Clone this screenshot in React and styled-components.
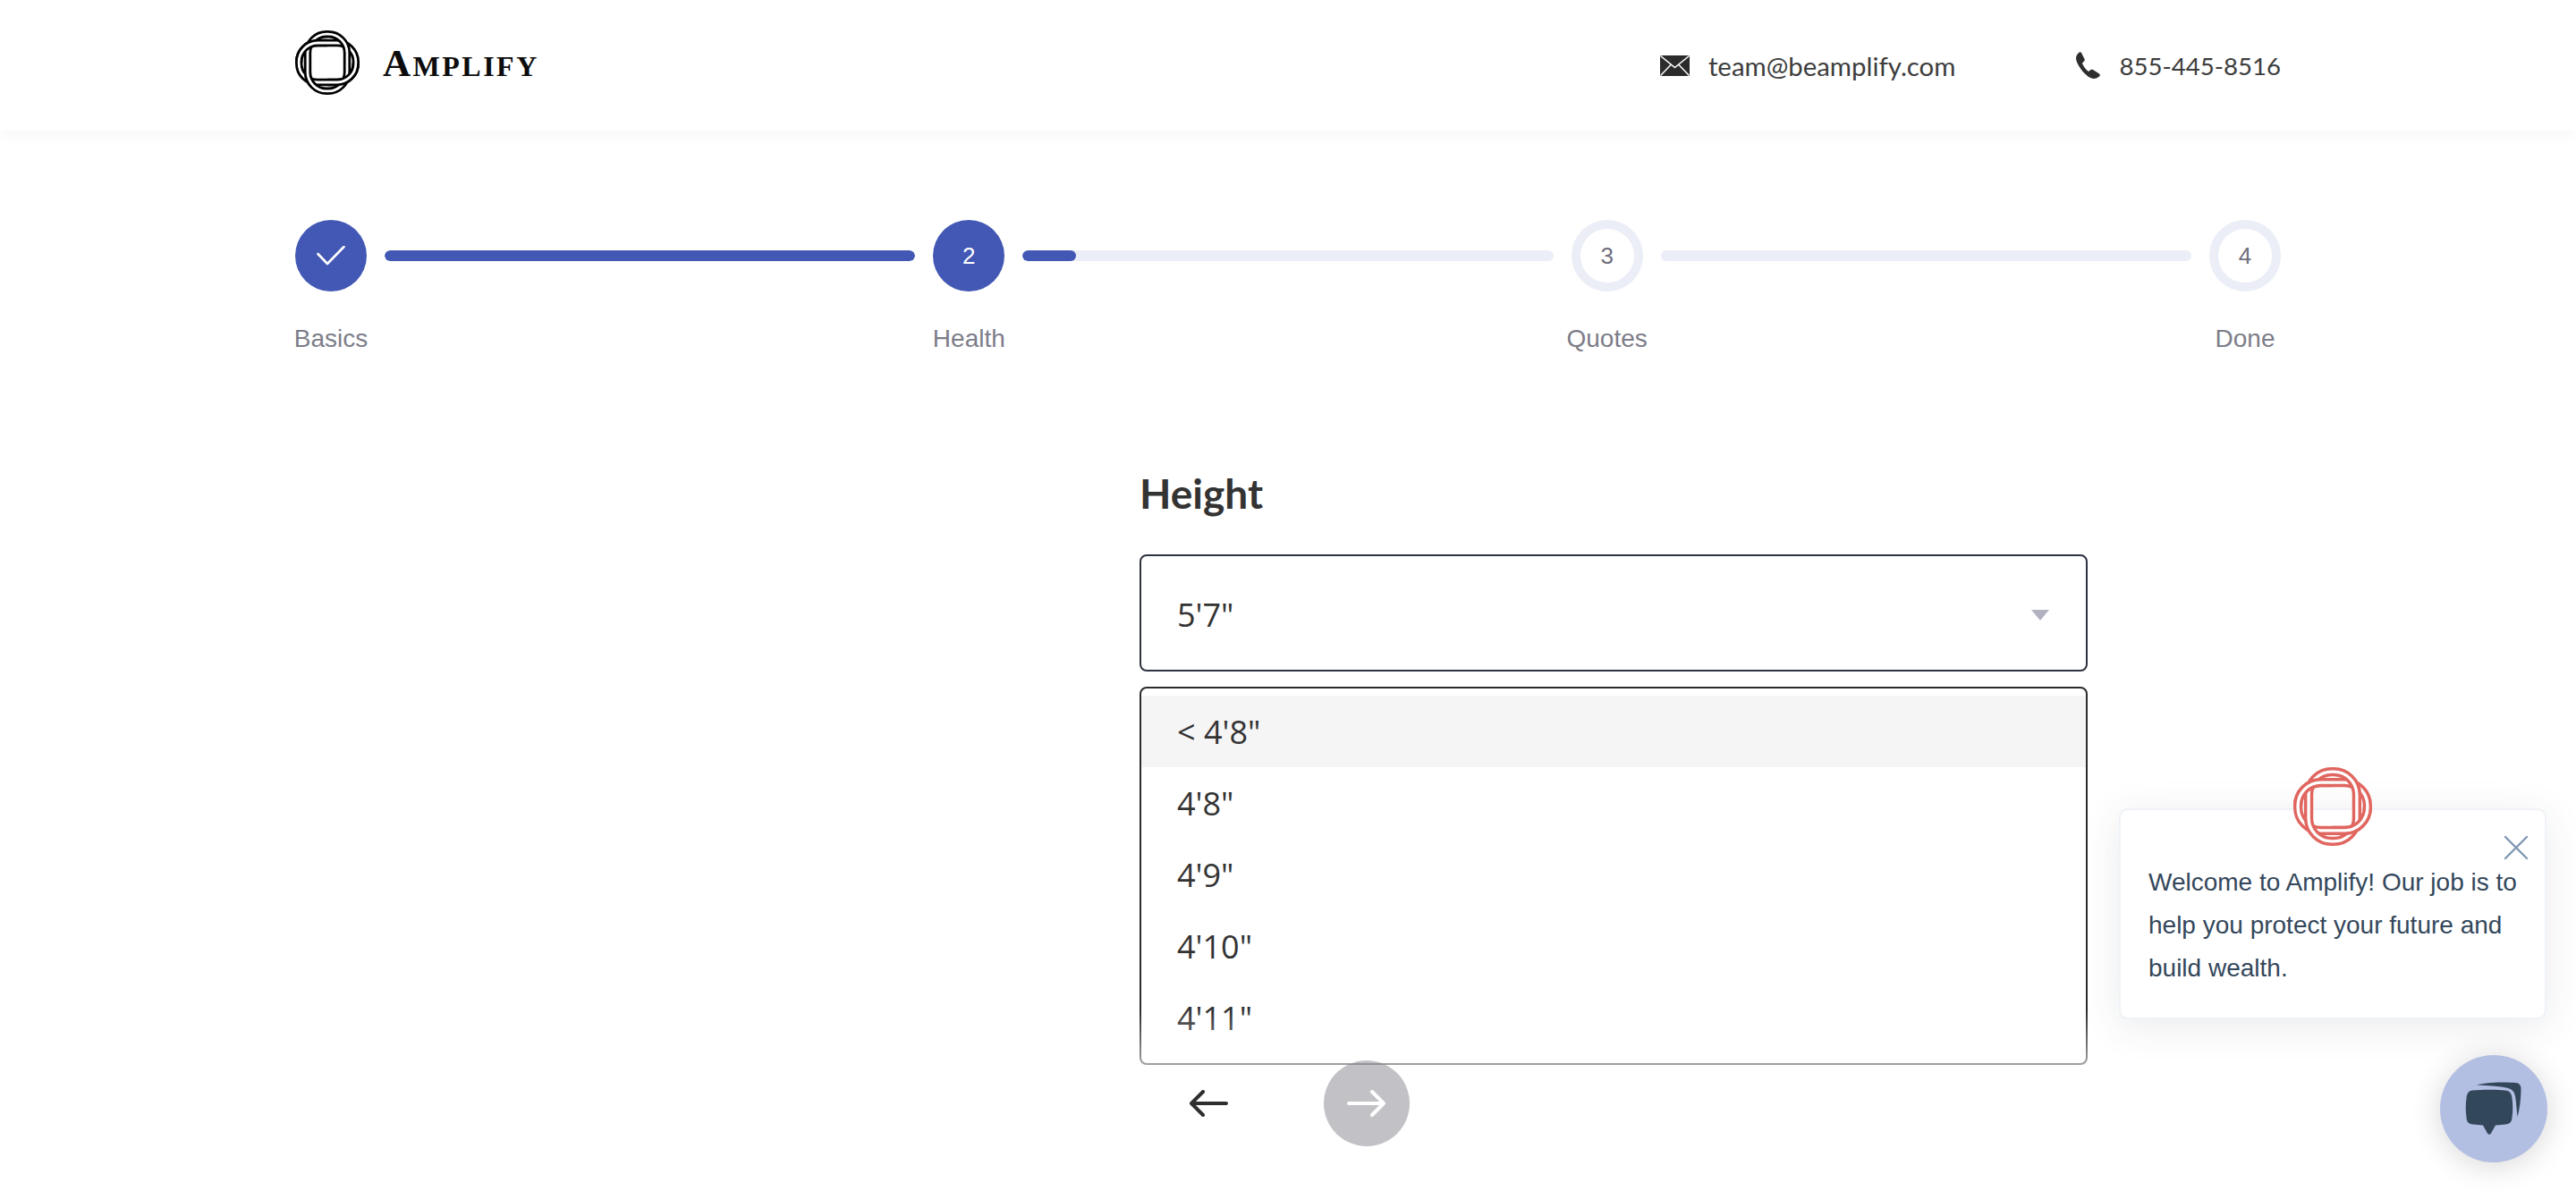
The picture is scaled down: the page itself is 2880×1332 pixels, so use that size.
import React from 'react';
import styled, { createGlobalStyle } from 'styled-components';

const GlobalStyle = createGlobalStyle`
  html, body {
    margin: 0;
    padding: 0;
    background: #fff;
    height: 100%;
  }

  body {
    font-family: "Liberation Sans", Arial, sans-serif;
    color: #333;
    overflow: hidden;
  }

  * {
    box-sizing: border-box;
  }
`;

const Page = styled.div`
  position: relative;
  height: 1332px;
  overflow: hidden;
`;

const Header = styled.header`
  height: 146px;
  background: #fff;
  box-shadow: 0 3px 18px rgba(0, 0, 0, 0.04);
`;

const HeaderInner = styled.div`
  width: 2220px;
  height: 100%;
  margin: 0 auto;
  display: flex;
  align-items: center;
  justify-content: space-between;
`;

const Brand = styled.div`
  display: flex;
  align-items: center;
  gap: 26px;
  margin-top: -6px;
`;

const Wordmark = styled.div`
  font-family: "Liberation Serif", "Times New Roman", serif;
  font-size: 32px;
  font-weight: 700;
  letter-spacing: 2.5px;
  line-height: 1;
  color: #0c0c0c;
  white-space: nowrap;

  span {
    font-size: 43px;
  }
`;

const Contacts = styled.div`
  display: flex;
  align-items: center;
  gap: 132px;
`;

const Contact = styled.div`
  display: flex;
  align-items: center;
  gap: 21px;
  font-family: Lato, "Open Sans", sans-serif;
  font-size: ${(p) => p.$size}px;
  color: #3d3d3d;
`;

const Stepper = styled.div`
  width: 2220px;
  margin: 100px auto 0;
  display: flex;
`;

const Step = styled.div`
  width: 80px;
  display: flex;
  flex-direction: column;
  align-items: center;
`;

const Circle = styled.div`
  width: 80px;
  height: 80px;
  border-radius: 50%;
  display: flex;
  align-items: center;
  justify-content: center;
  font-size: 26px;
  background: ${(p) => (p.$filled ? '#4258b4' : '#fff')};
  color: ${(p) => (p.$filled ? '#fff' : '#6f6f7c')};
  border: ${(p) => (p.$filled ? 'none' : '10px solid #eceef7')};
`;

const StepLabel = styled.div`
  margin-top: 37px;
  font-size: 28px;
  line-height: 32px;
  color: #7d7d89;
  white-space: nowrap;
`;

const Track = styled.div`
  flex: 1;
  height: 12px;
  margin: 34px 20px 0;
  border-radius: 6px;
  background: #eceef7;
  overflow: hidden;
`;

const TrackFill = styled.div`
  height: 100%;
  width: ${(p) => p.$percent}%;
  border-radius: 6px;
  background: #4258b4;
`;

const Form = styled.main`
  width: 1060px;
  margin: 127px 0 0 1274px;
`;

const Title = styled.h1`
  margin: 0 0 38px;
  font-family: Lato, "Open Sans", sans-serif;
  font-size: 46px;
  font-weight: 700;
  line-height: 60px;
  color: #333;
`;

const SelectWrap = styled.div`
  position: relative;
`;

const SelectBox = styled.div`
  height: 131px;
  padding: 3px 40px 0;
  display: flex;
  align-items: center;
  justify-content: space-between;
  border: 2px solid #2e3240;
  border-radius: 8px;
  background: #fff;
  font-family: "Open Sans", "Noto Sans", sans-serif;
  font-size: 36px;
  color: #333;
`;

const Caret = styled.span`
  width: 0;
  height: 0;
  margin-right: 1px;
  margin-top: 1px;
  border-left: 10px solid transparent;
  border-right: 10px solid transparent;
  border-top: 12px solid #b0b2c0;
`;

const Menu = styled.ul`
  position: absolute;
  top: 148px;
  left: 0;
  right: 0;
  height: 423px;
  margin: 0;
  padding: 8px 0 0;
  list-style: none;
  border: 2px solid #2c2c2c;
  border-radius: 8px;
  background: #fff;
  overflow: hidden;
`;

const MenuItem = styled.li`
  height: 80px;
  padding: 1px 40px 0;
  display: flex;
  align-items: center;
  background: ${(p) => (p.$active ? '#f5f5f5' : 'transparent')};
  font-family: "Open Sans", "Noto Sans", sans-serif;
  font-size: 36px;
  color: #333;
`;

const MenuFade = styled.div`
  position: absolute;
  top: 510px;
  left: -6px;
  right: -6px;
  height: 66px;
  background: linear-gradient(rgba(255, 255, 255, 0), rgba(255, 255, 255, 0.6));
`;

const Footer = styled.div`
  position: relative;
  z-index: 2;
  display: flex;
  align-items: center;
  gap: 81px;
  margin-top: 435px;
  padding-left: 29px;
`;

const RoundButton = styled.button`
  width: 96px;
  height: 96px;
  padding: 0;
  border: none;
  border-radius: 50%;
  display: flex;
  align-items: center;
  justify-content: center;
  background: ${(p) => (p.$disabled ? 'rgba(136, 136, 146, 0.52)' : 'transparent')};
  color: ${(p) => (p.$disabled ? '#fff' : '#2e2e2e')};
`;

const ChatCard = styled.div`
  position: absolute;
  top: 904px;
  right: 33px;
  width: 478px;
  height: 236px;
  padding: 57px 20px 0 31px;
  border: 2px solid #eff2f6;
  border-radius: 10px;
  background: #fff;
  box-shadow: 0 8px 44px rgba(45, 62, 80, 0.1);
  font-size: 28px;
  line-height: 48px;
  color: #33475b;
`;

const ChatLogo = styled.div`
  position: absolute;
  top: -48px;
  left: 193px;
  line-height: 0;
`;

const CloseIcon = styled.svg`
  position: absolute;
  top: 28px;
  right: 18px;
`;

const Launcher = styled.div`
  position: absolute;
  right: 32px;
  bottom: 32px;
  width: 120px;
  height: 120px;
  border-radius: 50%;
  display: flex;
  align-items: center;
  justify-content: center;
  background: #b3bee3;
  box-shadow: 0 4px 34px rgba(0, 0, 0, 0.16);
`;

function RingLogo({ size, color }) {
  const id = `ring-${color.replace('#', '')}`;
  const band = (props) => (
    <>
      <rect {...props} fill="none" stroke={color} strokeWidth="8.4" />
      <rect {...props} fill="none" stroke="#fff" strokeWidth="2.8" />
    </>
  );
  const wide = { x: 4.2, y: 14, width: 63.6, height: 44, rx: 21, ry: 21 };
  const tall = { x: 14, y: 4.2, width: 44, height: 63.6, rx: 21, ry: 21 };

  return (
    <svg width={size} height={size} viewBox="0 0 72 72">
      <defs>
        <clipPath id={id}>
          <rect x="0" y="0" width="36" height="36" />
          <rect x="36" y="36" width="36" height="36" />
        </clipPath>
      </defs>
      {band(wide)}
      {band(tall)}
      <g clipPath={`url(#${id})`}>{band(wide)}</g>
    </svg>
  );
}

function MailIcon() {
  return (
    <svg width="33" height="23" viewBox="0 0 33 23">
      <rect width="33" height="23" fill="#2b2b2b" />
      <path
        d="M0.5 0.5 L16.5 13.5 L32.5 0.5 M0.5 22.5 L12 10.5 M32.5 22.5 L21 10.5"
        fill="none"
        stroke="#fff"
        strokeWidth="1.5"
      />
    </svg>
  );
}

function PhoneIcon() {
  return (
    <svg width="30" height="30" viewBox="0 0 30 30">
      <path
        d="M6 1 C7 0 8.5 0 9 1 L12.5 8 C13 9 12.5 10 12 10.5 L10 12.5 C10.5 15 14 20 17 22 L19.5 20 C20.5 19.5 21.5 19.5 22 20 L29 24.5 C30 25.5 30 26.5 29.5 27 C27.5 29 25 30 23 30 C15 30 3 14 3 7 C3 5 4 3 6 1 Z"
        fill="#2e2e2e"
      />
    </svg>
  );
}

function CheckIcon() {
  return (
    <svg width="32" height="22" viewBox="0 0 32 22">
      <path d="M1.5 9 L12 20 L30.5 1" fill="none" stroke="#fff" strokeWidth="2.6" strokeLinecap="round" strokeLinejoin="round" />
    </svg>
  );
}

function Arrow({ left }) {
  return (
    <svg width="44" height="30" viewBox="0 0 44 30">
      <path
        d={left ? 'M42 15 H3 M16 2 L3 15 L16 28' : 'M2 15 H41 M28 2 L41 15 L28 28'}
        fill="none"
        stroke="currentColor"
        strokeWidth="4"
        strokeLinecap="round"
        strokeLinejoin="round"
      />
    </svg>
  );
}

function ChatIcon() {
  return (
    <svg width="76" height="70" viewBox="0 0 76 70">
      <path
        d="M14 14.5 C25 13.5 42 13.5 51 14.5 C56 15 58 18 58.5 23 C59.5 30 59.5 38 58.5 45 C58 50 56 52 51 52.5 L40 53.5 L35 62.5 Q33 65 31 62.5 L26 53.5 L15 52.5 C10 52 8 50 7.5 45 C6.5 38 6.5 30 7.5 23 C8 18 10 15 14 14.5 Z"
        fill="#33475b"
      />
      <path
        d="M19 8.5 C30 5 52 5 63 6 C67 6.5 68.5 9 68.5 13 C68.5 24 67 36 64.5 44 C63.5 34 63 26 62 21 C61 15 58 13 52 11.5 C42 9.5 30 9 19 8.5 Z"
        fill="#33475b"
      />
    </svg>
  );
}

const heights = ['< 4\'8"', '4\'8"', '4\'9"', '4\'10"', '4\'11"'];

function App() {
  return (
    <Page>
      <GlobalStyle />
      <Header>
        <HeaderInner>
          <Brand>
            <RingLogo size={72} color="#000000" />
            <Wordmark>
              <span>A</span>MPLIFY
            </Wordmark>
          </Brand>
          <Contacts>
            <Contact $size={29.4}>
              <MailIcon />
              team@beamplify.com
            </Contact>
            <Contact $size={27.6}>
              <PhoneIcon />
              855-445-8516
            </Contact>
          </Contacts>
        </HeaderInner>
      </Header>

      <Stepper>
        <Step>
          <Circle $filled>
            <CheckIcon />
          </Circle>
          <StepLabel>Basics</StepLabel>
        </Step>
        <Track>
          <TrackFill $percent={100} />
        </Track>
        <Step>
          <Circle $filled>2</Circle>
          <StepLabel>Health</StepLabel>
        </Step>
        <Track>
          <TrackFill $percent={10} />
        </Track>
        <Step>
          <Circle>3</Circle>
          <StepLabel>Quotes</StepLabel>
        </Step>
        <Track />
        <Step>
          <Circle>4</Circle>
          <StepLabel>Done</StepLabel>
        </Step>
      </Stepper>

      <Form>
        <Title>Height</Title>
        <SelectWrap>
          <SelectBox>
            5'7"
            <Caret />
          </SelectBox>
          <Menu>
            {heights.map((h, i) => (
              <MenuItem key={h} $active={i === 0}>
                {h}
              </MenuItem>
            ))}
          </Menu>
          <MenuFade />
        </SelectWrap>
        <Footer>
          <RoundButton type="button">
            <Arrow left />
          </RoundButton>
          <RoundButton type="button" $disabled>
            <Arrow />
          </RoundButton>
        </Footer>
      </Form>

      <ChatCard>
        <ChatLogo>
          <RingLogo size={88} color="#e0665f" />
        </ChatLogo>
        <CloseIcon width="28" height="28" viewBox="0 0 28 28">
          <path d="M2 2 L26 26 M26 2 L2 26" stroke="#7f97b4" strokeWidth="2.4" strokeLinecap="round" />
        </CloseIcon>
        Welcome to Amplify! Our job is to help you protect your future and build wealth.
      </ChatCard>
      <Launcher>
        <ChatIcon />
      </Launcher>
    </Page>
  );
}

export default App;
